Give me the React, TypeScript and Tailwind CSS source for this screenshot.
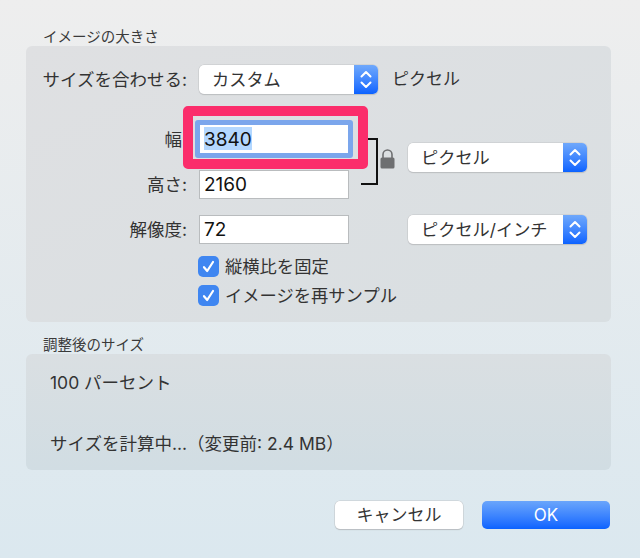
import type { ReactNode } from 'react'

const font = '[font-family:"Inter","Noto_Sans_CJK_JP",sans-serif]'

function Chevrons() {
    return (
        <svg width="14" height="21" viewBox="0 0 14 21" fill="none" stroke="white" strokeWidth="2" strokeLinecap="round" strokeLinejoin="round">
            <path d="M2.5 7.5 7 3l4.5 4.5" />
            <path d="M2.5 13.5 7 18l4.5-4.5" />
        </svg>
    )
}

function Select({ label }: { label: string }) {
    return (
        <div className="flex h-[29px] w-[179px] shrink-0 overflow-hidden rounded-[5px] bg-white shadow-[0_0_0_0.5px_#c4c6c8,0_1px_1px_#b4b8bb]">
            <span className="flex-1 pl-[13px] text-[17.2px] leading-[29px] text-[#333]">{label}</span>
            <span className="flex w-[24px] items-center justify-center bg-gradient-to-b from-[#6fa8fb] to-[#0a62ff]">
                <Chevrons />
            </span>
        </div>
    )
}

function Label({ children }: { children: ReactNode }) {
    return <span className="h-[29px] w-[163px] shrink-0 pr-[2px] text-right text-[17.5px] leading-[29px] text-[#333]">{children}</span>
}

function Field({ value, focused }: { value: string; focused?: boolean }) {
    if (focused) {
        return (
            <div className="ml-[10px] h-[29px] w-[150px] shrink-0 bg-white pl-[5px] pt-[2px] text-[19px] leading-[25px] text-[#111]">
                <span className="inline-block h-[23px] bg-[#b3d7ff] leading-[25px]">{value}</span>
            </div>
        )
    }
    return (
        <div className="ml-[10px] h-[29px] w-[150px] shrink-0 border border-[#b9bcbe] bg-white pl-[4px] text-[19px] leading-[27px] text-[#111]">
            {value}
        </div>
    )
}

function Check({ label }: { label: string }) {
    return (
        <div className="ml-[172px] flex h-[21px] items-center">
            <span className="flex h-[21px] w-[21px] items-center justify-center rounded-[5px] bg-[#3f86f1]">
                <svg width="15" height="15" viewBox="0 0 15 15" fill="none" stroke="white" strokeWidth="2.2" strokeLinecap="round" strokeLinejoin="round">
                    <path d="M3 8.2 6.2 12 12 3" />
                </svg>
            </span>
            <span className="ml-[6px] text-[17.3px] leading-[23px] text-[#333]">{label}</span>
        </div>
    )
}

function Heading({ children }: { children: ReactNode }) {
    return <h2 className="h-[20px] pl-[17px] text-[14.5px] leading-[21px] text-[#3a3a3a]">{children}</h2>
}

export default function App() {
    return (
        <div className={`h-[558px] w-[640px] overflow-hidden bg-gradient-to-b from-[#eeeeee] to-[#dbe8ef] pb-0 pl-[26px] pr-[29px] pt-[26px] ${font}`}>
            <Heading>イメージの大きさ</Heading>
            <section className="relative h-[276px] rounded-[6px] bg-gradient-to-br from-[#dfe0e2] to-[#d9dfe2] pt-[19px]">
                <div className="flex">
                    <Label>サイズを合わせる:</Label>
                    <div className="ml-[10px]">
                        <Select label="カスタム" />
                    </div>
                    <span className="ml-[14px] text-[17px] leading-[28px] text-[#333]">ピクセル</span>
                </div>

                <div className="mt-[31px] flex">
                    <div className="flex flex-col gap-[16px]">
                        <div className="flex">
                            <Label>幅:</Label>
                            <Field value="3840" focused />
                        </div>
                        <div className="flex">
                            <Label>高さ:</Label>
                            <Field value="2160" />
                        </div>
                    </div>
                    <div className="ml-[12px] mt-[13px] h-[47px] w-[17px] shrink-0 border-y-2 border-r-2 border-[#111]" />
                    <svg className="ml-[2px] mt-[23px] shrink-0" width="15" height="21" viewBox="0 0 15 21">
                        <path d="M3 10V6.5a4.5 4.5 0 0 1 9 0V10" fill="none" stroke="#6e6f71" strokeWidth="1.6" />
                        <rect x="0.5" y="9.5" width="14" height="11" rx="1.5" fill="#6e6f71" />
                    </svg>
                    <div className="ml-[13px] mt-[18px]">
                        <Select label="ピクセル" />
                    </div>
                </div>

                <div className="mt-[16px] flex">
                    <Label>解像度:</Label>
                    <Field value="72" />
                    <div className="ml-[59px]">
                        <Select label="ピクセル/インチ" />
                    </div>
                </div>

                <div className="mt-[12px] flex flex-col gap-[8px]">
                    <Check label="縦横比を固定" />
                    <Check label="イメージを再サンプル" />
                </div>

                {/* ピンクの強調枠 */}
                <div className="absolute left-[157px] top-[60px] h-[63px] w-[185px] rounded-[5px] border-[10px] border-[#fb2d6b]">
                    <div className="absolute left-[2px] top-[4px] h-[38px] w-[158px] rounded-[3px] border-[5px] border-[#7ba6ec]" />
                </div>
            </section>

            <div className="mt-[12px]">
                <Heading>調整後のサイズ</Heading>
            </div>
            <section className="flex h-[116px] flex-col rounded-[6px] bg-gradient-to-b from-[#dadfe2] to-[#d1dde3] pl-[24px] pt-[16px] text-[17.5px] leading-[26px] text-[#333]">
                <p>100 パーセント</p>
                <p className="mt-[35px]">サイズを計算中...（変更前: 2.4 MB）</p>
            </section>

            <div className="mr-px mt-[31px] flex justify-end gap-[19px]">
                <button className="h-[28px] w-[128px] rounded-[5px] bg-white text-[17px] leading-[28px] text-[#333] shadow-[0_0_0_0.5px_#c4c8cb,0_1px_1px_#aeb4b8]">キャンセル</button>
                <button className="h-[28px] w-[128px] rounded-[5px] bg-gradient-to-b from-[#6aa5fb] to-[#0a62ff] text-[17px] leading-[28px] text-white">OK</button>
            </div>
        </div>
    )
}
